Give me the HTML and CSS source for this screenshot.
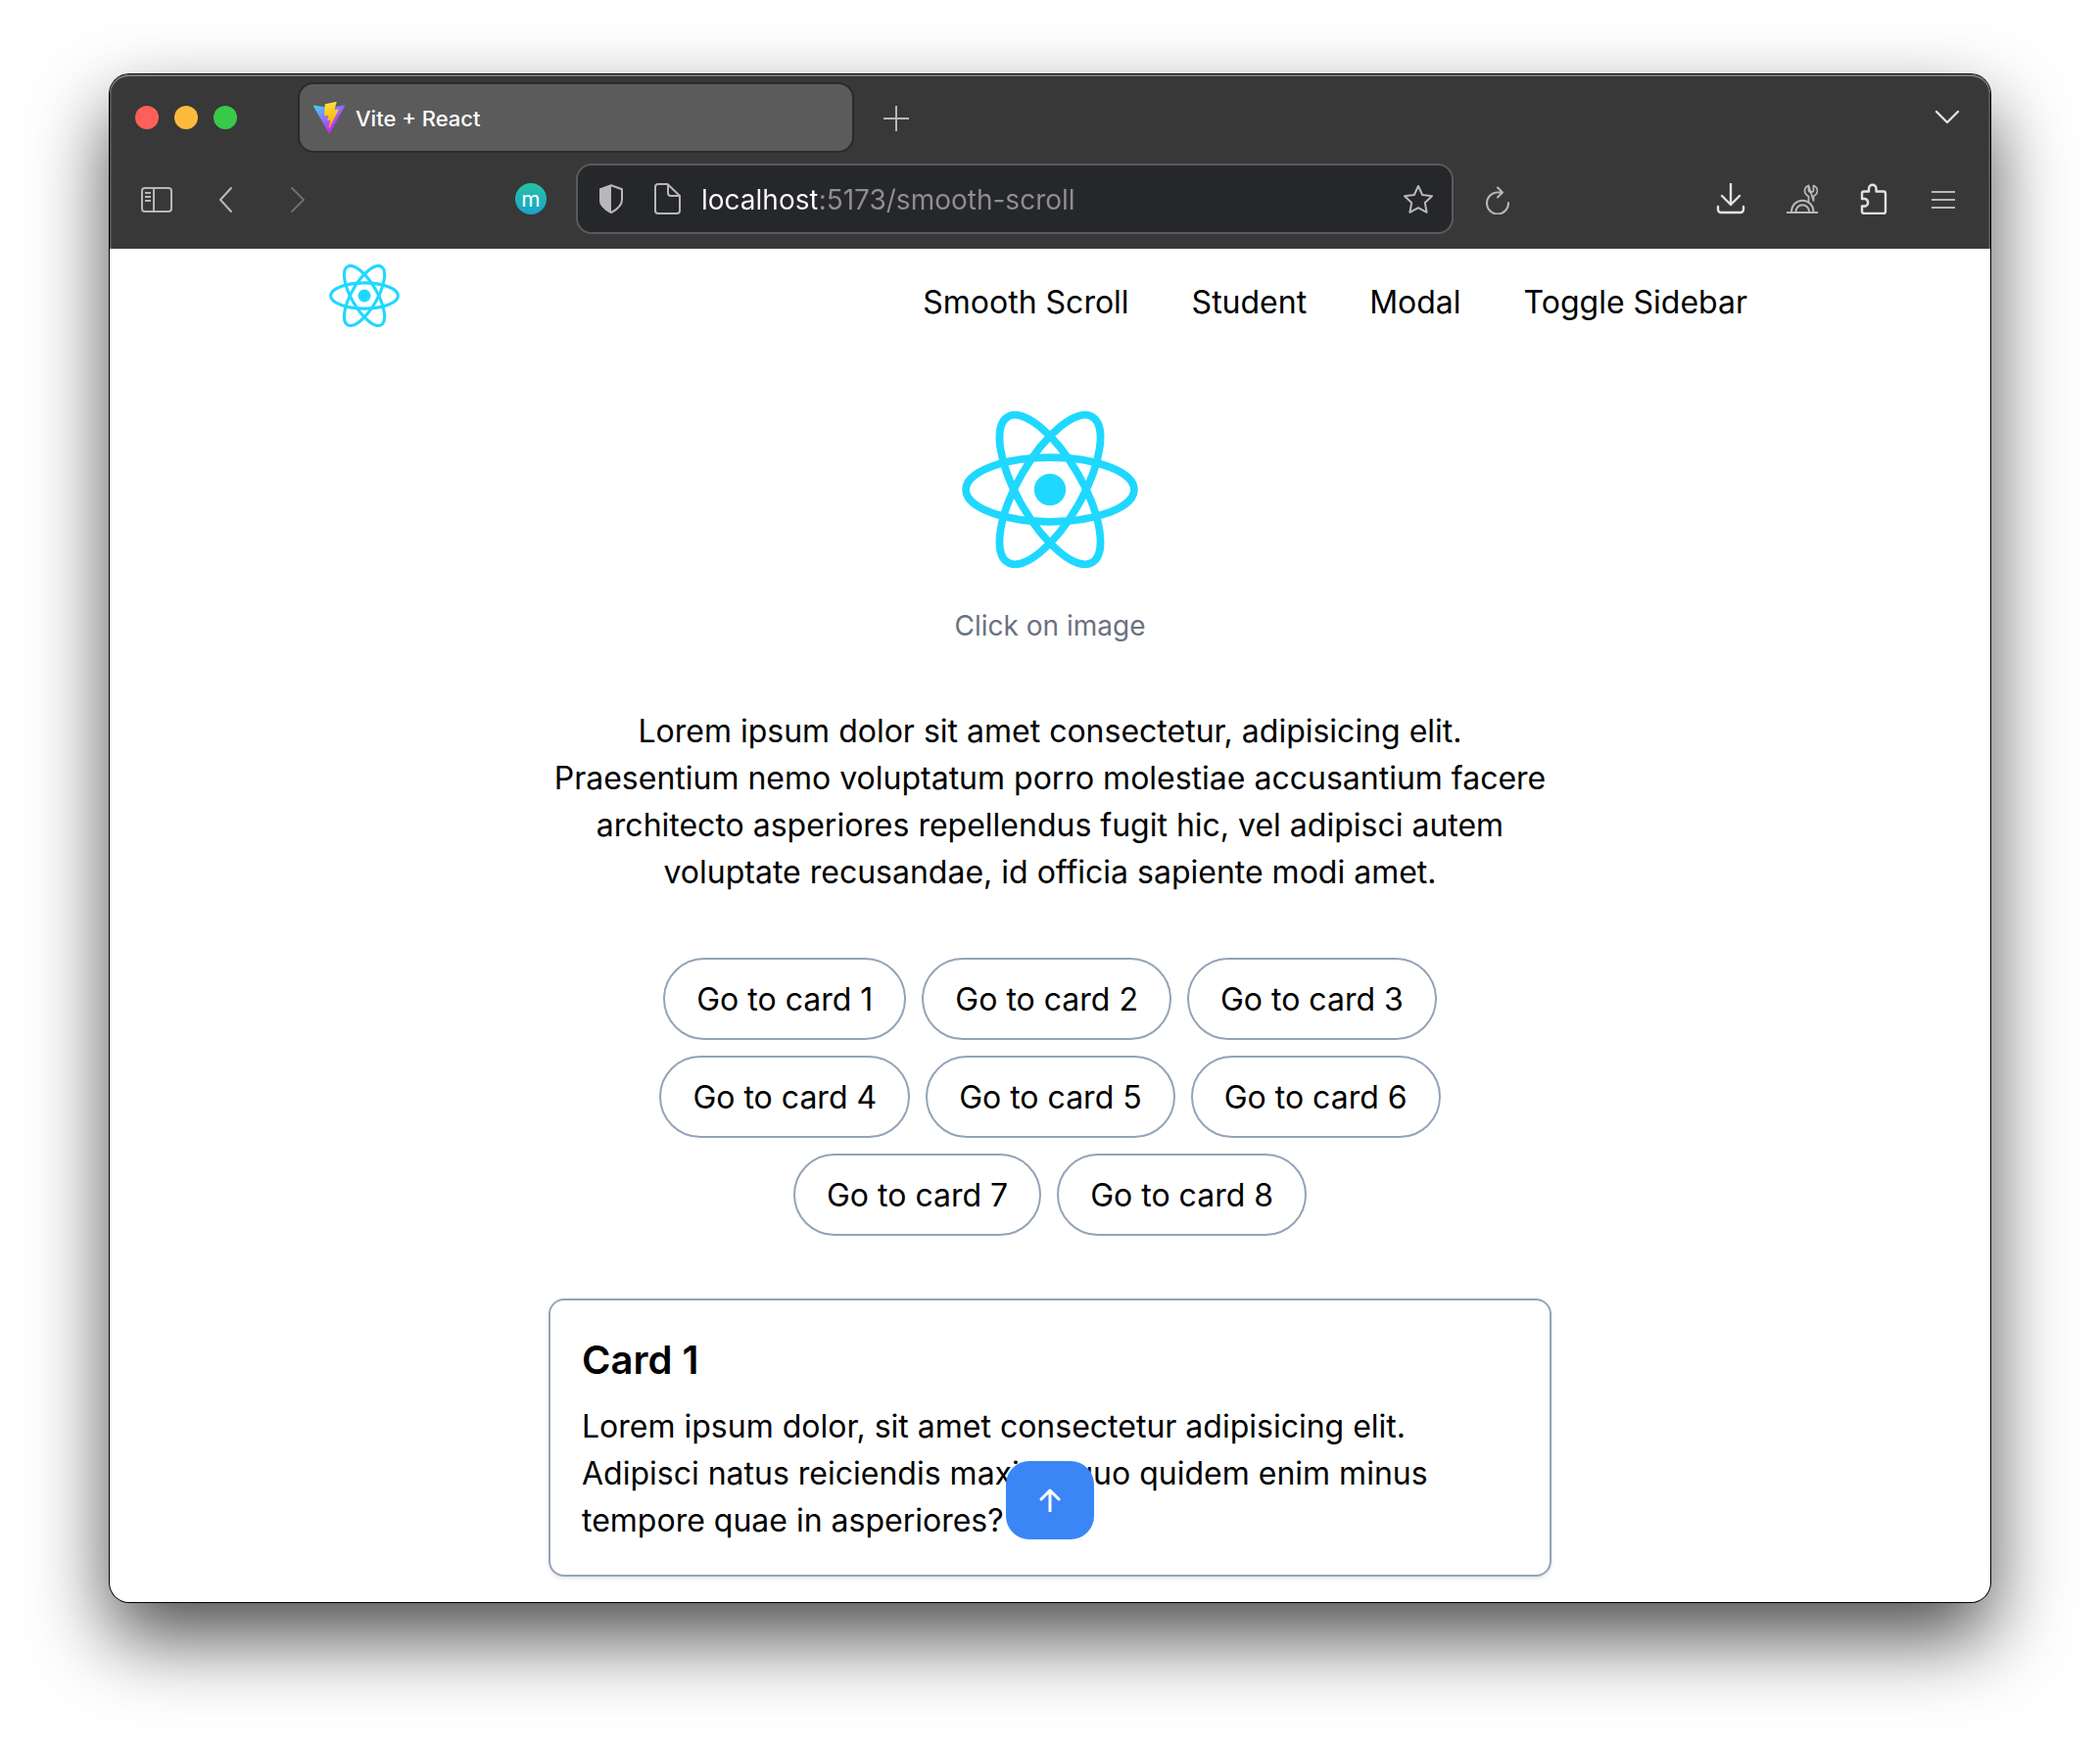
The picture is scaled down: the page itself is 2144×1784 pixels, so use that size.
FILE: index.html
```html
<!DOCTYPE html>
<html lang="en">
<head>
<meta charset="utf-8">
<title>Vite + React</title>
<link rel="stylesheet" href="styles.css">
</head>
<body>
<svg class="defs" aria-hidden="true">
  <symbol id="react" viewBox="0 0 256 228">
    <circle cx="128" cy="114" r="23" fill="currentColor"/>
    <g fill="none" stroke="currentColor" stroke-width="11">
      <ellipse cx="128" cy="114" rx="122.5" ry="46.7"/>
      <ellipse cx="128" cy="114" rx="122.5" ry="46.7" transform="rotate(60 128 114)"/>
      <ellipse cx="128" cy="114" rx="122.5" ry="46.7" transform="rotate(120 128 114)"/>
    </g>
  </symbol>
</svg>
<div class="window">
  <div class="chrome">
    <div class="tabbar">
      <div class="lights">
        <button class="light light-close" aria-label="Close"></button>
        <button class="light light-min" aria-label="Minimize"></button>
        <button class="light light-max" aria-label="Zoom"></button>
      </div>
      <button class="tab">
        <svg width="32" height="32" viewBox="0 0 256 257" aria-hidden="true">
          <defs>
            <linearGradient id="v1" x1="-.8%" x2="57.6%" y1="7.7%" y2="78.4%"><stop offset="0" stop-color="#41d1ff"/><stop offset="1" stop-color="#bd34fe"/></linearGradient>
            <linearGradient id="v2" x1="43.4%" x2="50.3%" y1="2.2%" y2="89%"><stop offset="0" stop-color="#ffea83"/><stop offset=".083" stop-color="#ffdd35"/><stop offset="1" stop-color="#ffa800"/></linearGradient>
          </defs>
          <path fill="url(#v1)" d="M255.153 37.938L134.897 252.976c-2.483 4.44-8.862 4.466-11.382.048L.875 37.958c-2.746-4.814 1.371-10.646 6.827-9.67l120.385 21.517a6.537 6.537 0 0 0 2.322-.004l117.867-21.483c5.438-.991 9.574 4.796 6.877 9.62Z"/>
          <path fill="url(#v2)" d="M185.432.063L96.44 17.501a3.268 3.268 0 0 0-2.634 3.014l-5.474 92.456a3.268 3.268 0 0 0 3.997 3.378l24.777-5.718c2.318-.535 4.413 1.507 3.936 3.838l-7.361 36.047c-.495 2.426 1.782 4.5 4.151 3.78l15.304-4.649c2.372-.72 4.652 1.36 4.15 3.788l-11.698 56.621c-.732 3.542 3.979 5.473 5.943 2.437l1.313-2.028l72.516-144.72c1.215-2.423-.88-5.186-3.54-4.672l-25.505 4.922c-2.396.462-4.435-1.77-3.759-4.114l16.646-57.705c.677-2.35-1.37-4.583-3.769-4.113Z"/>
        </svg>
        <span>Vite + React</span>
      </button>
      <button class="tool" aria-label="New tab"><svg width="32" height="32" viewBox="0 0 32 32"><path d="M3 17h26M16 4v26" stroke-linecap="butt"/></svg></button>
      <button class="tool tool-bright tool-end" aria-label="List all tabs"><svg width="32" height="32" viewBox="0 0 32 32"><path d="M5 10l11 11 11-11" stroke-width="2.4"/></svg></button>
    </div>
    <div class="navbar">
      <div class="navbar-left">
        <button class="tool" aria-label="Sidebar"><svg width="32" height="32" viewBox="0 0 32 32"><rect x="1" y="5" width="30" height="24" rx="3"/><path d="M13 5v24M4 10h6M4 14h6M4 18h6" stroke-linecap="butt"/></svg></button>
        <button class="tool tool-back" aria-label="Back"><svg width="32" height="32" viewBox="0 0 32 32"><path d="M20 5L9 17l11 12"/></svg></button>
        <button class="tool tool-forward" aria-label="Forward"><svg width="32" height="32" viewBox="0 0 32 32"><path d="M10 5l12 12-12 12"/></svg></button>
        <button class="profile" aria-label="Container m">m</button>
      </div>
      <div class="urlbar">
        <button class="tool" aria-label="Tracking protection"><svg width="32" height="32" viewBox="0 0 32 32"><path d="M16 2.200l11 4V17c0 6-5 10-11 13.200C10 27 5 23 5 17V6.200z"/><path d="M16 2v28.500C9 27 4 23 4 17V6z" fill="currentColor" stroke="none"/></svg></button>
        <button class="tool" aria-label="Site information"><svg width="32" height="32" viewBox="0 0 32 32"><path d="M7 1h9.500L29 13v15a3 3 0 0 1-3 3H7a3 3 0 0 1-3-3V4a3 3 0 0 1 3-3zM17 2v8a3 3 0 0 0 3 3h9"/></svg></button>
        <input class="url" type="text" aria-label="Address" value="localhost:5173/smooth-scroll">
        <button class="tool" aria-label="Bookmark"><svg width="32" height="32" viewBox="0 0 32 32"><path d="M16 3l4.200 9 9.800 1.300-7.200 6.700 1.800 9.800L16 25.200l-8.600 4.600L9.200 20 2 13.300 11.800 12z" stroke-linejoin="round"/></svg></button>
      </div>
      <div class="navbar-right">
        <button class="tool" aria-label="Reload"><svg width="32" height="32" viewBox="0 0 32 32"><path d="M15 4.500l5 5-5 5M19 9.500h-4A11 11 0 1 0 26 20"/></svg></button>
        <div class="actions">
          <button class="tool tool-bright" aria-label="Downloads"><svg width="32" height="32" viewBox="0 0 32 32"><path d="M15 1v21M6 13l9 9 9-9M2 24v3a3 3 0 0 0 3 3h20a3 3 0 0 0 3-3v-3" stroke-width="2.400"/></svg></button>
          <button class="tool" aria-label="Developer tools"><svg width="32" height="32" viewBox="0 0 32 32"><path d="M0 30h32" stroke-linecap="butt"/><path d="M5 29a11 11 0 0 1 22.500 0M9.500 29a6.700 6.700 0 0 1 13.500 0"/><path d="M22.500 2.500c-3 1-4 3-4 5.500s1.500 4 4 5.500v5M27.500 18v-4.500c2.500-1.500 4-3 4-5.500s-1-4.500-4-5.500V7c0 3-5 3-5 0V2.500z" stroke-width="1.800"/></svg></button>
          <button class="tool tool-bright" aria-label="Extensions"><svg width="32" height="32" viewBox="0 0 32 32"><path d="M5 10.500a2 2 0 0 1 2-2h5V5.500a3.500 3.500 0 0 1 7.500 0v3H27a2 2 0 0 1 2 2V29a2 2 0 0 1-2 2H7a2 2 0 0 1-2-2v-5.500h3.500a4 4 0 0 0 0-7.500H5z" stroke-width="2.400"/></svg></button>
          <button class="tool" aria-label="Menu"><svg width="32" height="32" viewBox="0 0 32 32"><path d="M4 9h24M4 17h24M4 25h24" stroke-linecap="butt"/></svg></button>
        </div>
      </div>
    </div>
  </div>

  <div class="page">
    <header class="site-header">
      <a class="brand" href="#" aria-label="Home"><svg width="72" height="64"><use href="#react"/></svg></a>
      <nav class="site-nav">
        <a href="#">Smooth Scroll</a>
        <a href="#">Student</a>
        <a href="#">Modal</a>
        <a href="#">Toggle Sidebar</a>
      </nav>
    </header>
    <main class="content">
      <button class="hero" aria-label="React logo"><svg width="180" height="160"><use href="#react"/></svg></button>
      <p class="caption">Click on image</p>
      <p class="intro">Lorem ipsum dolor sit amet consectetur, adipisicing elit. Praesentium nemo voluptatum porro molestiae accusantium facere architecto asperiores repellendus fugit hic, vel adipisci autem voluptate recusandae, id officia sapiente modi amet.</p>
      <div class="jumps">
        <button>Go to card 1</button>
        <button>Go to card 2</button>
        <button>Go to card 3</button>
        <button>Go to card 4</button>
        <button>Go to card 5</button>
        <button>Go to card 6</button>
        <button>Go to card 7</button>
        <button>Go to card 8</button>
      </div>
      <article class="card">
        <h2>Card 1</h2>
        <p>Lorem ipsum dolor, sit amet consectetur adipisicing elit. Adipisci natus reiciendis maxime quo quidem enim minus tempore quae in asperiores?</p>
      </article>
    </main>
    <button class="to-top" aria-label="Back to top"><svg width="24" height="24" viewBox="0 0 24 24"><path d="M12 23V2M3 11l9-9 9 9"/></svg></button>
  </div>
</div>
</body>
</html>
```
FILE: styles.css
```css
* {
  box-sizing: border-box;
}

body {
  display: flex;
  min-height: 100vh;
  margin: 0;
  padding: 76px 112px 148px;
  background: #fff;
  color: #000;
  font: 32px/48px Inter, "Liberation Sans", sans-serif;
}

h2,
p {
  margin: 0;
}

button,
input {
  margin: 0;
  padding: 0;
  border: 0;
  background: none;
  color: inherit;
  font: inherit;
}

a {
  color: inherit;
  text-decoration: none;
}

svg {
  display: block;
}

.defs {
  position: absolute;
  width: 0;
  height: 0;
}

.window {
  display: flex;
  flex: 1;
  flex-direction: column;
  min-width: 0;
  overflow: hidden;
  border-radius: 20px;
  background: #fff;
  box-shadow: 0 0 0 1px #000, 0 36px 80px rgba(0, 0, 0, 0.7);
}

/* Browser chrome */

.chrome {
  height: 178px;
  padding-top: 8px;
  border-radius: 20px 20px 0 0;
  background: #383838;
  box-shadow: inset 0 2px 0 #787878, inset 2px 0 0 #505050, inset -2px 0 0 #505050;
}

.tabbar {
  display: flex;
  align-items: center;
  height: 72px;
  padding: 0 28px 0 26px;
}

.lights {
  display: flex;
  gap: 16px;
  width: 166px;
}

.light {
  width: 24px;
  height: 24px;
  border-radius: 50%;
}

.light-close {
  background: #ff5f59;
}

.light-min {
  background: #fdbb3e;
}

.light-max {
  background: #38c84a;
}

.tab {
  display: flex;
  align-items: center;
  gap: 11px;
  width: 568px;
  height: 72px;
  margin-right: 27px;
  padding: 0 14px;
  border: 2px solid #2a2a2a;
  border-radius: 16px;
  background: #5b5b5b;
  color: #fff;
  font-size: 22px;
  font-weight: 500;
  line-height: 32px;
}

.tab span {
  padding-top: 2px;
}

.tool {
  color: #b8b8b8;
}

.tool svg,
.to-top svg {
  fill: none;
  stroke: currentColor;
  stroke-width: 2;
  stroke-linecap: round;
  stroke-linejoin: round;
}

.tool-bright {
  color: #e2e2e2;
}

.tool-end {
  margin-left: auto;
}

.navbar {
  display: grid;
  grid-template-columns: 446px 896px 1fr;
  align-items: center;
  gap: 30px;
  padding-top: 11px;
  padding-right: 32px;
}

.navbar-left {
  display: flex;
  align-items: center;
  gap: 40px;
  padding-left: 32px;
}

.tool-forward {
  color: #6e6e6e;
}

.profile {
  width: 32px;
  height: 32px;
  margin-left: auto;
  border-radius: 50%;
  background: linear-gradient(#26c2a0, #19a4cf);
  color: #fff;
  font-size: 22px;
  line-height: 30px;
  text-align: center;
}

.urlbar {
  display: flex;
  align-items: center;
  gap: 25px;
  height: 72px;
  padding: 0 18px;
  border: 2px solid #5b5b5c;
  border-radius: 16px;
  background: #26272a;
}

/* The host part of the address is white, the rest is grey. */
.url {
  flex: 1;
  min-width: 0;
  height: 42px;
  margin-left: -6px;
  padding-top: 2px;
  background: linear-gradient(90deg, #fff 118px, #8f8f91 118px);
  background-clip: text;
  color: transparent;
  font-size: 28px;
  line-height: 40px;
}

.navbar-right,
.actions {
  display: flex;
  justify-content: space-between;
}

.actions {
  gap: 40px;
}

/* Page */

.page {
  position: relative;
  flex: 1;
}

.site-header {
  display: flex;
  align-items: center;
  justify-content: space-between;
  max-width: 1536px;
  margin: 0 auto;
  padding: 16px 32px;
}

.brand {
  padding-bottom: 14px;
  color: #1fd8ff;
}

.site-nav {
  display: flex;
  gap: 64px;
  padding-right: 24px;
}

.content {
  display: flex;
  flex-direction: column;
  align-items: center;
  max-width: 1024px;
  margin: 0 auto;
  padding-top: 56px;
}

.hero {
  color: #1fd8ff;
}

.caption {
  margin: 39px 0 64px;
  color: #6b7280;
  font-size: 28px;
  line-height: 40px;
}

.intro {
  text-align: center;
}

.jumps {
  display: flex;
  flex-wrap: wrap;
  justify-content: center;
  gap: 16px;
  max-width: 860px;
  margin: 63px 0 64px;
}

.jumps button {
  padding: 17px 32px 15px;
  border: 2px solid #94a3b8;
  border-radius: 42px;
}

.card {
  align-self: stretch;
  padding: 33px 32px 31px;
  border: 2px solid #94a3b8;
  border-radius: 16px;
  box-shadow: 0 2px 4px rgba(0, 0, 0, 0.1);
}

.card h2 {
  margin-bottom: 16px;
  font-size: 40px;
  font-weight: 600;
  line-height: 56px;
}

.to-top {
  position: absolute;
  bottom: 64px;
  left: 50%;
  display: grid;
  place-items: center;
  width: 90px;
  height: 80px;
  margin-left: -45px;
  border-radius: 24px;
  background: #3b86f6;
  color: #fff;
}

.to-top svg {
  stroke-width: 3;
}
```
